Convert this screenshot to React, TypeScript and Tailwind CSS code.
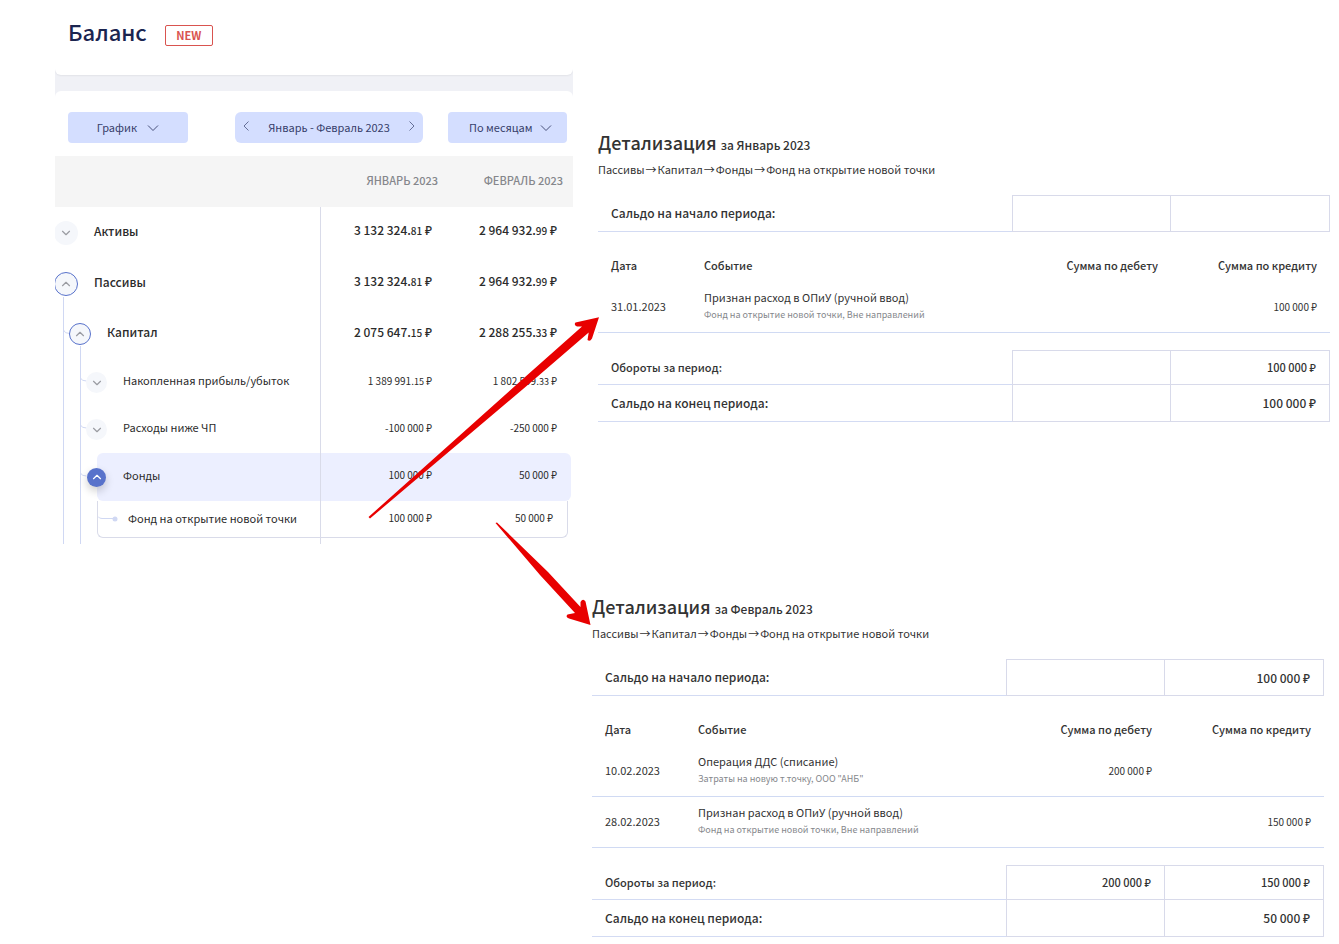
import React from "react";
import { ChevronDown, ChevronUp } from "lucide-react";

interface Money {
  whole: string;
  cents?: string;
}

interface BalanceRow {
  name: string;
  level: 0 | 1 | 2;
  open?: boolean;
  january: Money;
  february: Money;
}

interface Entry {
  date: string;
  title: string;
  note: string;
  debit?: string;
  credit?: string;
}

interface DetailProps {
  period: string;
  openingCredit?: string;
  entries: Entry[];
  turnoverDebit?: string;
  turnoverCredit: string;
  closingCredit: string;
  className: string;
}

const balanceRows: BalanceRow[] = [
  {
    name: "Активы",
    level: 0,
    january: { whole: "3 132 324", cents: "81" },
    february: { whole: "2 964 932", cents: "99" },
  },
  {
    name: "Пассивы",
    level: 0,
    open: true,
    january: { whole: "3 132 324", cents: "81" },
    february: { whole: "2 964 932", cents: "99" },
  },
  {
    name: "Капитал",
    level: 1,
    open: true,
    january: { whole: "2 075 647", cents: "15" },
    february: { whole: "2 288 255", cents: "33" },
  },
  {
    name: "Накопленная прибыль/убыток",
    level: 2,
    january: { whole: "1 389 991", cents: "15" },
    february: { whole: "1 802 599", cents: "33" },
  },
  {
    name: "Расходы ниже ЧП",
    level: 2,
    january: { whole: "-100 000" },
    february: { whole: "-250 000" },
  },
];

const rowStyles = {
  0: {
    height: "h-[51px]",
    indent: "-ml-px gap-4",
    toggle: "size-6",
    text: "text-[12px] font-medium",
    amount: "text-[12px]",
    cents: "text-[10px]",
  },
  1: {
    height: "h-[50px]",
    indent: "pl-[14px] gap-4",
    toggle: "size-[22px]",
    text: "text-[12px] font-medium",
    amount: "text-[12px]",
    cents: "text-[10px]",
  },
  2: {
    height: "h-[47px]",
    indent: "pl-[31px] gap-4",
    toggle: "size-[21px]",
    text: "text-[11px]",
    amount: "text-[10px]",
    cents: "text-[9px]",
  },
};

const crumbs = ["Пассивы", "Капитал", "Фонды", "Фонд на открытие новой точки"];

const Amount: React.FC<{ value: Money; level?: 0 | 1 | 2 }> = ({
  value,
  level = 2,
}) => (
  <span className={`whitespace-nowrap ${rowStyles[level].amount}`}>
    {value.whole}
    {value.cents && (
      <>
        .<span className={rowStyles[level].cents}>{value.cents}</span>
      </>
    )}{" "}
    ₽
  </span>
);

const Caret: React.FC<{ className?: string }> = ({ className }) => (
  <svg
    width="12"
    height="8"
    fill="none"
    stroke="currentColor"
    className={className}
  >
    <path d="M1 1.500 6 6.500l5-5" strokeWidth="0.900" />
  </svg>
);

const BalanceTable: React.FC = () => (
  <div className="relative">
    {/* Tree connectors */}
    <svg
      className="absolute left-0 top-[51px] pointer-events-none"
      width="60"
      height="337"
      fill="none"
      stroke="#d0d8f3"
    >
      <path d="M8.500 90V337M8.500 123q1 3.500 6 3.500M25.500 139V337" />
      <path d="M25.500 171q1 3 6 3M25.500 218q1 3 6 3M25.500 266q1 3 6 3" />
    </svg>

    <table className="relative w-full table-fixed border-separate border-spacing-0 text-[#2b2b2b]">
      <colgroup>
        <col />
        <col className="w-[125px]" />
        <col className="w-[127px]" />
      </colgroup>
      <thead>
        <tr className="h-[51px] bg-[#f5f5f5] text-[11px] text-[#85878c]">
          <th aria-label="Статья" />
          <th className="pr-2 pb-[2px] text-right font-medium whitespace-nowrap">
            ЯНВАРЬ 2023
          </th>
          <th className="pr-[10px] pb-[2px] text-right font-medium whitespace-nowrap">
            ФЕВРАЛЬ 2023
          </th>
        </tr>
      </thead>
      <tbody>
        {balanceRows.map((row) => {
          const style = rowStyles[row.level];
          return (
            <tr key={row.name} className={`${style.height} ${style.text}`}>
              <td className="border-r border-[#d9dbe9]">
                <div className={`flex items-center ${style.indent}`}>
                  <button
                    type="button"
                    aria-label={row.name}
                    className={`flex shrink-0 items-center justify-center rounded-full bg-[#f5f7fb] text-[#9a9ca2] ${style.toggle} ${row.open ? "border border-[#5872cb]" : ""}`}
                  >
                    {row.open ? (
                      <ChevronUp size={14} strokeWidth={2} />
                    ) : (
                      <ChevronDown size={14} strokeWidth={2} />
                    )}
                  </button>
                  <span className="pb-1 whitespace-nowrap">{row.name}</span>
                </div>
              </td>
              <td className="pr-[14px] pb-[5px] text-right">
                <Amount value={row.january} level={row.level} />
              </td>
              <td className="pr-4 pb-[5px] text-right">
                <Amount value={row.february} level={row.level} />
              </td>
            </tr>
          );
        })}
        <tr className="text-[11px]">
          <td className="border-r border-[#d9dbe9]">
            <div className="ml-[42px] flex h-12 items-center gap-[17px] rounded-l-md bg-[#ecefff]">
              <button
                type="button"
                aria-label="Фонды"
                className="-ml-[10px] flex size-[19px] shrink-0 items-center justify-center rounded-full bg-[#5872cb] text-white shadow-[0_4px_8px_rgba(0,0,0,0.2)]"
              >
                <ChevronUp size={14} strokeWidth={2} />
              </button>
              <span className="pb-1">Фонды</span>
            </div>
          </td>
          <td>
            <div className="flex h-12 items-center justify-end bg-[#ecefff] pr-[14px] pb-[5px]">
              <Amount value={{ whole: "100 000" }} />
            </div>
          </td>
          <td>
            <div className="mr-[2px] flex h-12 items-center justify-end rounded-r-md bg-[#ecefff] pr-[14px] pb-[5px]">
              <Amount value={{ whole: "50 000" }} />
            </div>
          </td>
        </tr>
        <tr className="text-[11px]">
          <td className="border-r border-[#d9dbe9] pb-[6px]">
            <div className="ml-[42px] flex h-[37px] items-center rounded-bl-md border-b border-l border-[#d9dbe9]">
              <svg width="30" height="8" className="shrink-0">
                <path d="M0 1.500q1 2 4 2H17" fill="none" stroke="#d0d8f3" />
                <circle cx="17" cy="4" r="2.500" fill="#d0d8f3" />
              </svg>
              <span className="pb-[2px] whitespace-nowrap">
                Фонд на открытие новой точки
              </span>
            </div>
          </td>
          <td className="pb-[6px]">
            <div className="flex h-[37px] items-center justify-end border-b border-[#d9dbe9] pr-[14px] pb-[3px]">
              <Amount value={{ whole: "100 000" }} />
            </div>
          </td>
          <td className="pb-[6px]">
            <div className="mr-[5px] flex h-[37px] items-center justify-end rounded-br-md border-r border-b border-[#d9dbe9] pr-[14px] pb-[3px]">
              <Amount value={{ whole: "50 000" }} />
            </div>
          </td>
        </tr>
      </tbody>
    </table>
  </div>
);

const Detail: React.FC<DetailProps> = ({
  period,
  openingCredit,
  entries,
  turnoverDebit,
  turnoverCredit,
  closingCredit,
  className,
}) => (
  <section className={`text-[#333] ${className}`}>
    <h2 className="h-7 text-[18px] leading-[26px] font-medium">
      Детализация <span className="text-[12px] leading-none">за {period}</span>
    </h2>
    <nav className="mt-[2px] mb-4 flex h-5 gap-px text-[11px] leading-5 whitespace-nowrap">
      {crumbs.map((crumb, i) => (
        <React.Fragment key={crumb}>
          {i > 0 && <span>→</span>}
          <span>{crumb}</span>
        </React.Fragment>
      ))}
    </nav>

    <table className="w-full table-fixed border-separate border-spacing-0 text-[11px]">
      <colgroup>
        <col className="w-[106px]" />
        <col />
        <col className="w-[158px]" />
        <col className="w-[160px]" />
      </colgroup>
      <tbody>
        <tr className="h-[37px] text-[12px] font-medium">
          <th
            colSpan={2}
            className="border-b border-[#d3dbf3] pl-[13px] text-left font-medium"
          >
            Сальдо на начало периода:
          </th>
          <td className="border-y border-l border-[#d8daea]" />
          <td className="border border-[#d8daea] pr-[13px] text-right">
            {openingCredit}
          </td>
        </tr>
        <tr className="h-[50px]">
          <th className="pt-4 pl-[13px] text-left font-medium">Дата</th>
          <th className="pt-4 text-left font-medium">Событие</th>
          <th className="pt-4 pr-3 text-right font-medium">Сумма по дебету</th>
          <th className="pt-4 pr-[13px] text-right font-medium">
            Сумма по кредиту
          </th>
        </tr>
        {entries.map((entry) => (
          <tr key={entry.date} className="h-[51px]">
            <td className="border-b border-[#d0daf3] pb-[2px] pl-[13px]">
              {entry.date}
            </td>
            <td className="border-b border-[#d0daf3] pb-[2px] leading-[18px] whitespace-nowrap">
              {entry.title}
              <div className="text-[9px] leading-[18px] text-[#85878c]">
                {entry.note}
              </div>
            </td>
            <td className="border-b border-[#d0daf3] pr-3 pb-[2px] text-right text-[10px]">
              {entry.debit}
            </td>
            <td className="border-b border-[#d0daf3] pr-[13px] pb-[2px] text-right text-[10px]">
              {entry.credit}
            </td>
          </tr>
        ))}
        <tr className="h-[17px]">
          <td colSpan={4} />
        </tr>
        <tr className="h-[35px] font-medium">
          <th
            colSpan={2}
            className="border-b border-[#d3dbf3] pl-[13px] text-left font-medium"
          >
            Обороты за период:
          </th>
          <td className="border-y border-l border-[#d8daea] pr-[13px] text-right">
            {turnoverDebit}
          </td>
          <td className="border border-[#d8daea] pr-[13px] text-right">
            {turnoverCredit}
          </td>
        </tr>
        <tr className="h-[37px] text-[12px] font-medium">
          <th
            colSpan={2}
            className="border-b border-[#d3dbf3] pl-[13px] text-left font-medium"
          >
            Сальдо на конец периода:
          </th>
          <td className="border-b border-l border-[#d8daea]" />
          <td className="border-x border-b border-[#d8daea] pr-[13px] text-right">
            {closingCredit}
          </td>
        </tr>
      </tbody>
    </table>
  </section>
);

export default function App() {
  return (
    <div className="relative grid min-h-screen grid-cols-[518fr_766fr] overflow-hidden bg-white pl-[55px] font-['Noto_Sans_CJK_SC','Noto_Sans',sans-serif]">
      <main className="overflow-hidden">
        <div className="bg-[#f0f1f6]">
          <header className="flex h-[75px] items-center gap-[18px] rounded-b-md bg-white pb-[5px] pl-[13px] shadow-[0_1px_2px_rgba(0,0,0,0.06)]">
            <h1 className="pb-2 text-[22px] leading-8 font-medium text-[#1b2550]">
              Баланс
            </h1>
            <span className="flex h-[21px] w-12 items-center justify-center rounded-xs border border-[#d9534f] text-[11px] font-bold text-[#d9534f]">
              NEW
            </span>
          </header>
          <div className="mt-4 flex items-center rounded-t-md bg-white pt-[21px] pr-[6px] pb-[13px] pl-[13px] text-[11px] text-[#37406b]">
            <button
              type="button"
              className="flex h-[31px] w-[120px] items-center justify-center gap-[10px] rounded-[4px] bg-[#d4deff]"
            >
              График
              <Caret />
            </button>
            <div className="mr-[25px] ml-auto flex h-[31px] w-[188px] items-center justify-between rounded-md bg-[#d4deff] px-[7px]">
              <button type="button" aria-label="Назад" className="pb-[3px]">
                <svg width="8" height="12" fill="none" stroke="currentColor">
                  <path d="M6.500 1.500 2 6l4.500 4.500" strokeWidth="0.700" />
                </svg>
              </button>
              <span>Январь - Февраль 2023</span>
              <button type="button" aria-label="Вперёд" className="pb-[3px]">
                <svg width="8" height="12" fill="none" stroke="currentColor">
                  <path d="M1.500 1.500 6 6l-4.500 4.500" strokeWidth="0.700" />
                </svg>
              </button>
            </div>
            <div className="relative w-[119px]">
              <select
                aria-label="Группировка"
                className="h-[31px] w-full appearance-none rounded-[4px] bg-[#d4deff] pl-[21px]"
              >
                <option>По месяцам</option>
              </select>
              <Caret className="pointer-events-none absolute top-3 right-[15px]" />
            </div>
          </div>
        </div>
        <BalanceTable />
      </main>

      <div className="pt-[129px]">
        <Detail
          period="Январь 2023"
          className="mr-[9px] ml-[25px]"
          entries={[
            {
              date: "31.01.2023",
              title: "Признан расход в ОПиУ (ручной ввод)",
              note: "Фонд на открытие новой точки, Вне направлений",
              credit: "100 000 ₽",
            },
          ]}
          turnoverCredit="100 000 ₽"
          closingCredit="100 000 ₽"
        />
        <Detail
          period="Февраль 2023"
          className="mt-[171px] mr-[15px] ml-[19px]"
          openingCredit="100 000 ₽"
          entries={[
            {
              date: "10.02.2023",
              title: "Операция ДДС (списание)",
              note: 'Затраты на новую т.точку, ООО "АНБ"',
              debit: "200 000 ₽",
            },
            {
              date: "28.02.2023",
              title: "Признан расход в ОПиУ (ручной ввод)",
              note: "Фонд на открытие новой точки, Вне направлений",
              credit: "150 000 ₽",
            },
          ]}
          turnoverDebit="200 000 ₽"
          turnoverCredit="150 000 ₽"
          closingCredit="50 000 ₽"
        />
      </div>

      {/* Red callout arrows from the cells to their details */}
      <svg
        className="pointer-events-none absolute top-0 left-0"
        width="640"
        height="640"
        fill="#e80000"
      >
        <path d="M368.500 517 520 381.500 582 326.500 577 326.500Q573.500 325 575.500 322.500L599 317.300 592 338.500Q590 342 587.500 340L588.700 332.500 526 386.500 370 518.500Z" />
        <path d="M495.500 523 497 522.500 548 572 580.500 607 580.500 602Q583 598 585.500 601.500L590.500 625 569 618.500Q565 617 567.500 614.500L575 613 540 575Z" />
      </svg>
    </div>
  );
}
